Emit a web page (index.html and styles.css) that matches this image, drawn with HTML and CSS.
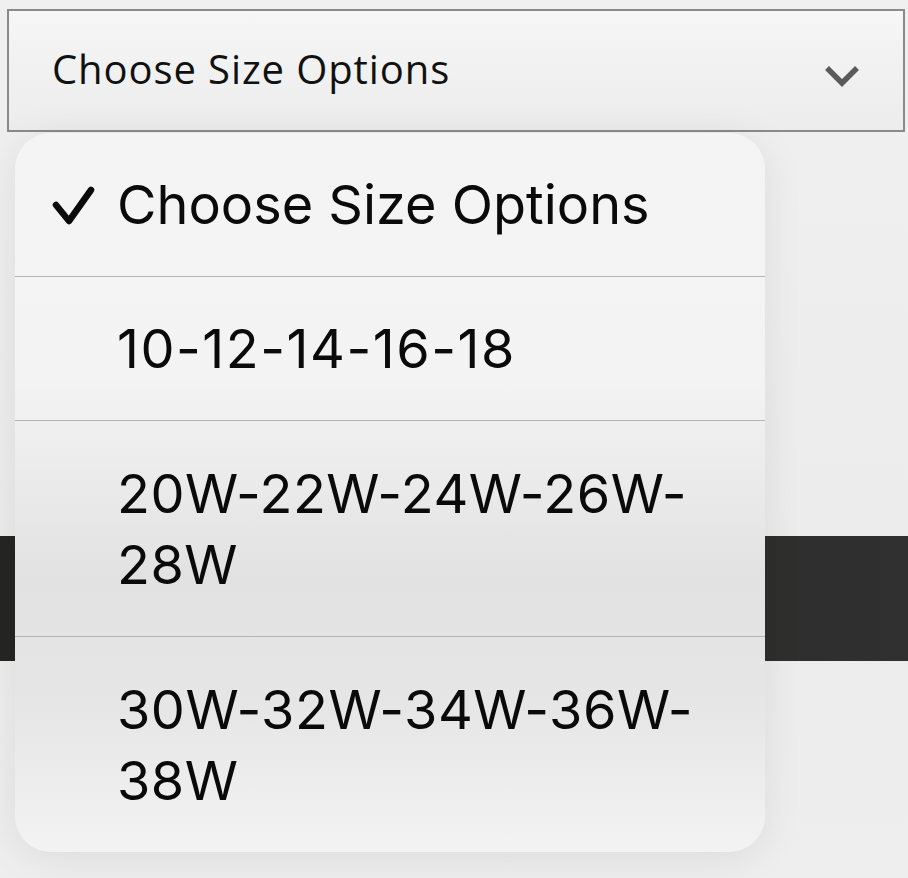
FILE: index.html
```html
<!DOCTYPE html>
<html>
<head>
<meta charset="utf-8">
<link rel="stylesheet" href="styles.css">
</head>
<body>
<div class="page">
  <div class="select">
    <span class="select-label">Choose Size Options</span>
    <svg class="chevron" width="38" height="26" viewBox="0 0 38 26"><path d="M4 4 L19 19 L34 4" fill="none" stroke="#5a5a5a" stroke-width="5.5"/></svg>
  </div>
  <div class="content">
    <div class="dark-bar"></div>
  </div>
  <div class="menu">
    <div class="item"><svg class="check" width="46" height="42" viewBox="0 0 46 42"><path d="M6 20 L19 36 L41 5" fill="none" stroke="#0a0a0a" stroke-width="6.5" stroke-linecap="round" stroke-linejoin="round"/></svg><span class="text">Choose Size Options</span></div>
    <div class="item num"><span class="text">10-12-14-16-18</span></div>
    <div class="item tall wide"><span class="text">20W-22W-24W-26W-28W</span></div>
    <div class="item tall wide last"><span class="text">30W-32W-34W-36W-38W</span></div>
  </div>
</div>
</body>
</html>
```
FILE: styles.css
```css
html, body {
  margin: 0;
  padding: 0;
}
body {
  background: linear-gradient(180deg, #f0f0f0 0%, #ececec 60%, #eeeeee 100%);
  width: 908px;
  height: 878px;
  overflow: hidden;
  font-family: "Inter", "Liberation Sans", sans-serif;
}
.page {
  position: relative;
  width: 908px;
  height: 878px;
  padding-top: 9px;
  box-sizing: border-box;
}
.select {
  margin-left: 7px;
  width: 898px;
  height: 123px;
  box-sizing: border-box;
  border: 2px solid #8a8a8a;
  background: linear-gradient(180deg, #f6f6f6 0%, #ececec 100%);
  display: flex;
  align-items: center;
  padding-left: 43px;
  padding-right: 44px;
  justify-content: space-between;
}
.select-label {
  font-family: "Open Sans", sans-serif;
  font-size: 40px;
  font-weight: 400;
  color: #111;
  letter-spacing: 0.9px;
  margin-top: -4px;
}
.chevron {
  margin-top: 12px;
  margin-right: -2px;
}
.content {
  padding-top: 404px;
}
.dark-bar {
  height: 125px;
  background: linear-gradient(90deg, #252624 0%, #2c2c2b 60%, #303030 100%);
}
.menu {
  position: absolute;
  left: 15px;
  top: 133px;
  width: 750px;
  height: 719px;
  border-radius: 36px;
  overflow: hidden;
  background: linear-gradient(180deg, #f4f4f4 0%, #f3f3f3 35%, #e2e2e2 62%, #e6e6e6 80%, #f3f3f3 100%);
  box-shadow: 0 6px 40px rgba(0, 0, 0, 0.08);
  display: flex;
  flex-direction: column;
}
.item {
  position: relative;
  display: flex;
  align-items: center;
  padding-left: 102px;
  padding-right: 56px;
  height: 143px;
  border-bottom: 1px solid #b4b4b4;
  font-size: 54px;
  line-height: 71px;
  color: #0a0a0a;
  flex: none;
}
.item.num {
  letter-spacing: 1.5px;
}
.item.wide {
  letter-spacing: 0.5px;
}
.item.tall {
  height: 215px;
}
.item.last {
  border-bottom: none;
}
.check {
  position: absolute;
  left: 35px;
  top: 52px;
}
```
